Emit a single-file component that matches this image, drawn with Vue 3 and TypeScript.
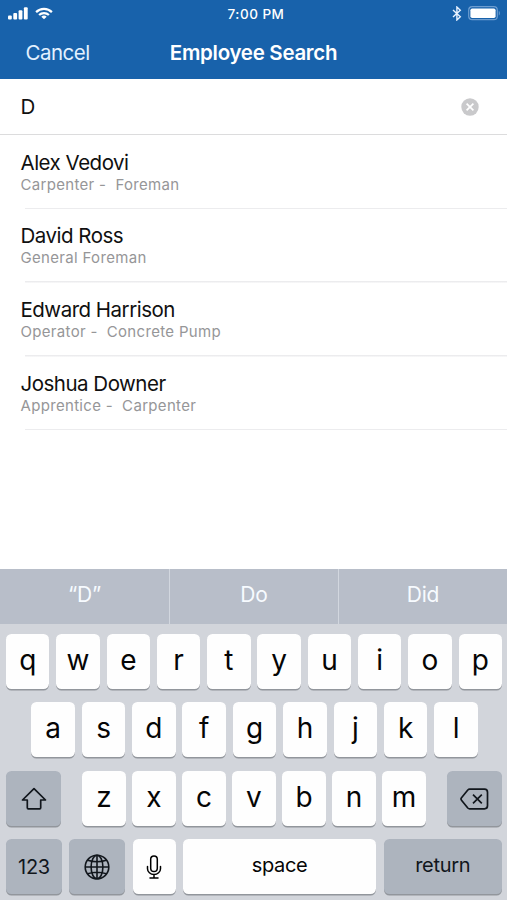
<script setup lang="ts">
interface Employee {
  name: string
  role: string
}

const employees: Employee[] = [
  { name: 'Alex Vedovi', role: 'Carpenter -  Foreman' },
  { name: 'David Ross', role: 'General Foreman' },
  { name: 'Edward Harrison', role: 'Operator -  Concrete Pump' },
  { name: 'Joshua Downer', role: 'Apprentice -  Carpenter' },
]
const suggestions: string[] = ['“D”', 'Do', 'Did']
const topRow: string[] = [...'qwertyuiop']
const homeRow: string[] = [...'asdfghjkl']
const bottomRow: string[] = [...'zxcvbnm']
</script>

<template>
  <main class="phone">
    <header class="header">
      <div class="status">
        <div class="status-left">
          <svg class="signal" viewBox="0 0 20 13" fill="#fff">
            <rect x="0" y="8.5" width="3.8" height="4" rx="1" />
            <rect x="5.3" y="6" width="3.8" height="6.5" rx="1" />
            <rect x="10.6" y="3.2" width="3.8" height="9.3" rx="1" />
            <rect x="15.9" y="0.3" width="3.8" height="12.2" rx="1" />
          </svg>
          <svg class="wifi" viewBox="0 0 18 13" fill="none" stroke="#fff" stroke-width="2.2">
            <path d="M1.1 5.1a11.2 11.2 0 0 1 15.8 0" />
            <path d="M4.1 8.1a6.9 6.9 0 0 1 9.8 0" />
            <path d="M9 12.3 6.3 9.8a3.9 3.9 0 0 1 5.4 0Z" fill="#fff" stroke="none" />
          </svg>
        </div>
        <span class="time">7:00 PM</span>
        <div class="status-right">
          <svg class="bluetooth" viewBox="0 0 10 15" fill="none" stroke="#e8f2ff" stroke-width="1.4">
            <path d="M1 4 8.3 10.8 4.9 14V1l3.4 3.2L1 11" />
          </svg>
          <svg class="battery" viewBox="0 0 33 15">
            <rect x="0.7" y="0.7" width="28.6" height="13" rx="3.5" fill="none" stroke="#6d9dd0" stroke-width="1.2" />
            <rect x="2.4" y="2.4" width="25.2" height="9.6" rx="1.8" fill="#fff" />
            <path d="M30.8 5v4.6c1.4-.5 1.4-4.1 0-4.6Z" fill="#6d9dd0" />
          </svg>
        </div>
      </div>
      <nav class="nav">
        <span class="cancel">Cancel</span>
        <h1 class="title">Employee Search</h1>
      </nav>
    </header>

    <div class="search">
      <span class="query">D</span>
      <svg class="clear" viewBox="0 0 18 18">
        <circle cx="9" cy="9" r="8.7" fill="#c9c9cb" />
        <path d="m5.6 5.6 6.8 6.8m0-6.8-6.8 6.8" stroke="#fff" stroke-width="1.7" />
      </svg>
    </div>

    <ul class="list">
      <li v-for="e in employees" :key="e.name" class="employee">
        <span class="name">{{ e.name }}</span>
        <span class="role">{{ e.role }}</span>
      </li>
    </ul>

    <section class="keyboard">
      <div class="suggestions">
        <span v-for="s in suggestions" :key="s" class="suggestion">{{ s }}</span>
      </div>
      <div class="keys">
        <div class="row">
          <span v-for="k in topRow" :key="k" class="key">{{ k }}</span>
        </div>
        <div class="row home">
          <span v-for="k in homeRow" :key="k" class="key">{{ k }}</span>
        </div>
        <div class="row spread">
          <span class="key dark symbol">
            <svg class="shift-icon" viewBox="0 0 26 24" fill="none" stroke="#11161c" stroke-width="1.7" stroke-linejoin="round">
              <path d="M13 1.6 24.5 13h-4.8v7.8q0 1-1 1H7.3q-1 0-1-1V13H1.5Z" />
            </svg>
          </span>
          <div class="letters">
            <span v-for="k in bottomRow" :key="k" class="key">{{ k }}</span>
          </div>
          <span class="key dark symbol">
            <svg class="delete-icon" viewBox="0 0 29 22" fill="none" stroke="#11161c" stroke-width="1.7" stroke-linejoin="round">
              <path d="M9.6 1.2H24.5q3 0 3 3V17.8q0 3-3 3H9.6q-1 0-1.8-.8L1.5 12.2q-1-1.2 0-2.4L7.8 2q.8-.8 1.800-.8Z" />
              <path d="m13 6.6 8.8 8.8m0-8.8L13 15.4" />
            </svg>
          </span>
        </div>
        <div class="row actions">
          <span class="key dark label numbers">123</span>
          <span class="key dark symbol">
            <svg class="globe" viewBox="0 0 26 26" fill="none" stroke="#11161c" stroke-width="1.6">
              <circle cx="13" cy="13" r="11.8" />
              <ellipse cx="13" cy="13" rx="5.9" ry="11.8" />
              <path d="M13 1.2v23.6M1.2 13h23.6M3.7 6.3q9.3 3 18.6 0M3.700 19.700q9.300-3 18.600 0" />
            </svg>
          </span>
          <span class="key symbol">
            <svg class="mic" viewBox="0 0 16 24" fill="none" stroke="#000" stroke-width="1.5" stroke-linecap="round">
              <rect x="4.7" y="1" width="6.6" height="15.6" rx="3.3" />
              <path d="M1.500 11.5v2.2a6.5 5.8 0 0 0 13 0v-2.2M8 19.5V23M4 23h8" />
            </svg>
          </span>
          <span class="key label">space</span>
          <span class="key dark label">return</span>
        </div>
      </div>
    </section>
  </main>
</template>

<style>
body {
  margin: 0;
}
</style>

<style scoped>
.phone {
  width: 507px;
  height: 900px;
  display: flex;
  flex-direction: column;
  overflow: hidden;
  background: #fff;
  color: #101010;
  font-family: Inter, "Liberation Sans", sans-serif;
}
.header {
  box-sizing: border-box;
  height: 79px;
  flex: none;
  background: #1862ab;
  color: #fff;
}
.status {
  display: grid;
  grid-template-columns: 1fr auto 1fr;
  align-items: center;
  height: 27px;
  padding: 0 6px 0 8px;
}
.status-left,
.status-right {
  display: flex;
  align-items: center;
}
.status-left {
  gap: 7px;
}
.status-right {
  justify-content: flex-end;
  gap: 6px;
}
.signal {
  width: 20px;
  height: 13px;
}
.wifi {
  width: 18px;
  height: 13px;
}
.bluetooth {
  width: 10px;
  height: 15px;
}
.battery {
  width: 33px;
  height: 15px;
}
.time {
  padding-left: 3px;
  font-size: 13.5px;
  font-weight: 500;
  letter-spacing: 0.5px;
}
.nav {
  display: grid;
  grid-template-columns: 1fr auto 1fr;
  align-items: center;
  height: 51px;
  padding: 0 25.5px;
}
.cancel {
  font-size: 20.5px;
  letter-spacing: -0.5px;
  color: #e3f1ff;
}
.title {
  margin: 0;
  font-size: 20.5px;
  font-weight: 600;
  letter-spacing: -0.3px;
}
.search {
  box-sizing: border-box;
  display: flex;
  align-items: center;
  justify-content: space-between;
  flex: none;
  height: 56px;
  padding: 0 28.5px 0 20.5px;
  border-bottom: 1px solid #dcdcdd;
}
.query {
  font-size: 20.5px;
}
.clear {
  width: 18px;
  height: 18px;
}
.list {
  margin: 0;
  padding: 0.6px 0 0;
  list-style: none;
  flex: 1;
}
.employee {
  box-sizing: border-box;
  display: flex;
  flex-direction: column;
  height: 73.7px;
  padding: 14px 0 0 20.5px;
  background: linear-gradient(#ececee, #ececee) 25px 100% / 100% 1.5px no-repeat;
}
.name {
  font-size: 20.5px;
  line-height: 26px;
  letter-spacing: -0.5px;
}
.role {
  font-size: 15px;
  line-height: 18px;
  letter-spacing: 0.32px;
  white-space: pre;
  color: #969698;
}
.keyboard {
  display: flex;
  flex-direction: column;
  flex: none;
  height: 331px;
  background: #d2d5db;
}
.suggestions {
  display: grid;
  grid-template-columns: repeat(3, 1fr);
  flex: none;
  height: 55px;
  background: #b8bec9;
}
.suggestion {
  display: flex;
  align-items: center;
  justify-content: center;
  padding-bottom: 4px;
  font-size: 21px;
  letter-spacing: -0.2px;
  color: #f7fbff;
}
.suggestion + .suggestion {
  border-left: 1px solid #d2d7df;
}
.keys {
  display: grid;
  grid-auto-rows: 55px;
  row-gap: 13.6px;
  padding: 9.5px 5px 0 6px;
}
.row {
  display: grid;
  grid-template-columns: repeat(10, 1fr);
  column-gap: 6.8px;
}
.home {
  grid-template-columns: repeat(9, 1fr);
  padding: 0 24.2px 0 25.4px;
}
.spread {
  grid-template-columns: 55px 1fr 55px;
  column-gap: 21.3px;
}
.letters {
  display: grid;
  grid-template-columns: repeat(7, 1fr);
  column-gap: 6.8px;
}
.actions {
  grid-template-columns: 56px 56px 43px 1fr 118.5px;
  column-gap: 7.3px;
}
.key {
  box-sizing: border-box;
  display: flex;
  align-items: center;
  justify-content: center;
  min-width: 0;
  padding-bottom: 3px;
  border-radius: 5.5px;
  background: #fefefe;
  box-shadow: 0 1.5px 0 #92969c;
  font-size: 28px;
  color: #050505;
}
.dark {
  background: #adb4be;
  color: #11161c;
}
.label {
  font-size: 20px;
  letter-spacing: -0.3px;
}
.numbers {
  padding-bottom: 0;
}
.symbol {
  padding: 1px 0 0;
}
.shift-icon {
  width: 26px;
  height: 24px;
}
.delete-icon {
  width: 29px;
  height: 22px;
}
.globe {
  width: 26px;
  height: 26px;
}
.mic {
  width: 16px;
  height: 24px;
}
</style>
